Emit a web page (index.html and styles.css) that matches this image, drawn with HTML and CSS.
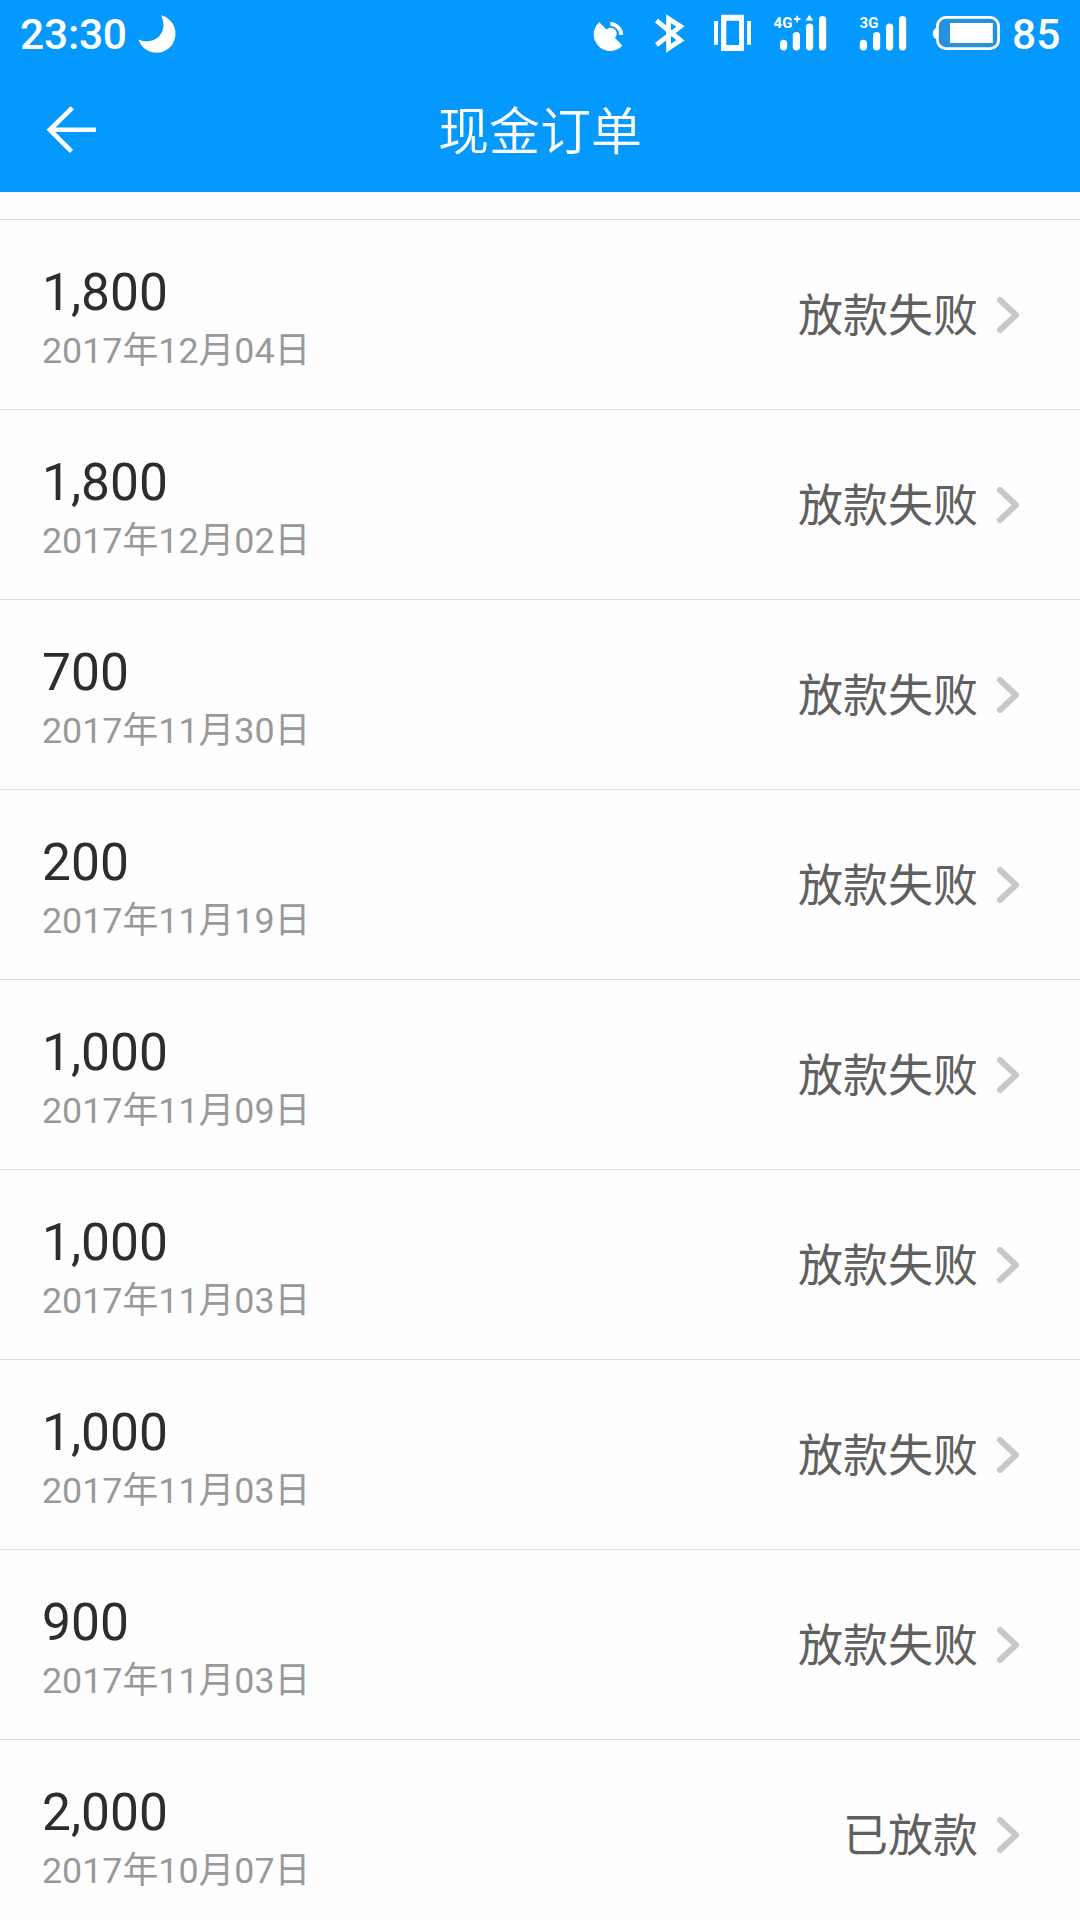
FILE: index.html
```html
<!DOCTYPE html>
<html lang="zh-CN">
<head>
<meta charset="utf-8">
<title>现金订单</title>
<link rel="stylesheet" href="styles.css">
</head>
<body>
<header class="header">
  <div class="status-bar">
    <div class="status-left">
      <span class="clock">23:30</span>
      <svg class="moon" width="40" height="68" viewBox="138 0 40 68"><path d="M161 15.3A19 19 0 1 1 138.4 39.6C153 46 170 34 161 15.3Z"/></svg>
    </div>
    <div class="status-right">
      <svg width="50" height="68" viewBox="590 0 50 68"><path d="M599.3 22.3L606.5 29.5A5 5 0 0 1 615 38L622.4 45.5A16.4 16.4 0 1 1 599.3 22.3Z"/><path class="line" stroke-width="3.8" d="M610.3 23.8A11.5 11.5 0 0 1 621.3 34.8"/></svg>
      <svg width="60" height="68" viewBox="640 0 60 68"><path class="line" stroke-width="4.8" d="M656.5 20.7L680.5 40.3L668.6 48.3V18.7L680.5 26.5L656.5 44.8"/></svg>
      <svg width="70" height="68" viewBox="700 0 70 68"><path d="M714 21h3.9v23.7H714zM747.1 21h3.9v23.7h-3.9z"/><path fill-rule="evenodd" d="M721.1 14.7H744V51H721.1zM726.3 20.8V45H739.1V20.8z"/></svg>
      <svg width="80" height="68" viewBox="770 0 80 68"><text class="network" x="773.5" y="27.8" textLength="19">4G</text><path d="M794 19h6.4M797.2 15.8v6.4" class="line" stroke-width="1.8"/><rect x="780" y="39.7" width="7.2" height="10.7" rx="3.6"/><rect x="792.8" y="32" width="7.2" height="18.4" rx="3.6"/><rect x="806" y="23.5" width="7.2" height="26.9" rx="3.6"/><rect x="819" y="16" width="7.2" height="34.4" rx="3.6"/><path d="M809.4 14.8L813.3 20.5H805.5Z"/></svg>
      <svg width="70" height="68" viewBox="850 0 70 68"><text class="network" x="859.5" y="27.8" textLength="19">3G</text><rect x="859.8" y="39.7" width="7.2" height="10.7" rx="3.6"/><rect x="873" y="32" width="7.2" height="18.4" rx="3.6"/><rect x="886" y="23.5" width="7.2" height="26.9" rx="3.6"/><rect x="899" y="16" width="7.2" height="34.4" rx="3.6"/></svg>
      <svg width="82" height="68" viewBox="930 0 82 68"><path d="M938 27C931 29 931 38 938 40Z"/><rect class="battery" x="937.4" y="17.4" width="61.2" height="31.2" rx="8.5"/><rect x="950" y="23" width="42.8" height="20"/></svg>
      <span class="battery-level">85</span>
    </div>
  </div>
  <nav class="title-bar">
    <svg class="back" width="60" height="60" viewBox="42 100 60 60"><path class="line" stroke-width="4.6" d="M96 129.8H50M72.3 107.8L49.8 129.8L71.5 151.3"/></svg>
    <h1 class="title">现金订单</h1>
  </nav>
</header>
<main class="orders">
  <div class="order"><div class="info"><div class="amount">1,800</div><div class="date">2017年12月04日</div></div><div class="state">放款失败</div><svg class="chevron" width="26" height="40" viewBox="0 0 26 40"><path d="M4 4L20 19L4 34"/></svg></div>
  <div class="order"><div class="info"><div class="amount">1,800</div><div class="date">2017年12月02日</div></div><div class="state">放款失败</div><svg class="chevron" width="26" height="40" viewBox="0 0 26 40"><path d="M4 4L20 19L4 34"/></svg></div>
  <div class="order"><div class="info"><div class="amount">700</div><div class="date">2017年11月30日</div></div><div class="state">放款失败</div><svg class="chevron" width="26" height="40" viewBox="0 0 26 40"><path d="M4 4L20 19L4 34"/></svg></div>
  <div class="order"><div class="info"><div class="amount">200</div><div class="date">2017年11月19日</div></div><div class="state">放款失败</div><svg class="chevron" width="26" height="40" viewBox="0 0 26 40"><path d="M4 4L20 19L4 34"/></svg></div>
  <div class="order"><div class="info"><div class="amount">1,000</div><div class="date">2017年11月09日</div></div><div class="state">放款失败</div><svg class="chevron" width="26" height="40" viewBox="0 0 26 40"><path d="M4 4L20 19L4 34"/></svg></div>
  <div class="order"><div class="info"><div class="amount">1,000</div><div class="date">2017年11月03日</div></div><div class="state">放款失败</div><svg class="chevron" width="26" height="40" viewBox="0 0 26 40"><path d="M4 4L20 19L4 34"/></svg></div>
  <div class="order"><div class="info"><div class="amount">1,000</div><div class="date">2017年11月03日</div></div><div class="state">放款失败</div><svg class="chevron" width="26" height="40" viewBox="0 0 26 40"><path d="M4 4L20 19L4 34"/></svg></div>
  <div class="order"><div class="info"><div class="amount">900</div><div class="date">2017年11月03日</div></div><div class="state">放款失败</div><svg class="chevron" width="26" height="40" viewBox="0 0 26 40"><path d="M4 4L20 19L4 34"/></svg></div>
  <div class="order"><div class="info"><div class="amount">2,000</div><div class="date">2017年10月07日</div></div><div class="state">已放款</div><svg class="chevron" width="26" height="40" viewBox="0 0 26 40"><path d="M4 4L20 19L4 34"/></svg></div>
</main>
</body>
</html>
```
FILE: styles.css
```css
* { box-sizing: border-box; }
body {
  margin: 0;
  height: 1920px;
  overflow: hidden;
  display: flex;
  flex-direction: column;
  background: #fefefe;
  font-family: Roboto, "Noto Sans CJK SC", sans-serif;
}
svg { display: block; flex: none; fill: #fff; }
.line { fill: none; stroke: #fff; }
.header { flex: none; height: 192px; background: #0399ff; color: #fff; }
.status-bar { display: flex; justify-content: space-between; height: 68px; padding-left: 20px; }
.status-left, .status-right { display: flex; }
.clock, .battery-level { font-size: 42.5px; font-weight: 500; line-height: 69px; }
.clock { width: 118px; letter-spacing: -0.2px; }
.battery-level { width: 68px; }
.status-right svg:nth-of-type(6) { margin-left: 10px; }
.network { font: 700 15px Roboto, sans-serif; }
.battery { fill: #2791dd; stroke: #fff; stroke-width: 2.8; }
.title-bar { display: grid; grid-template-columns: 60px 1fr 60px; align-items: center; height: 124px; padding: 0 42px; }
.title { margin: 0; padding-top: 5px; font-size: 51px; font-weight: 350; line-height: 74px; text-align: center; }
.orders { flex: none; padding-top: 27px; }
.order { display: flex; height: 190px; padding-left: 42px; border-top: 1px solid #dedede; }
.info { flex: 1; padding-top: 42px; }
.amount { font-size: 51.5px; line-height: 62px; color: #2d2d2d; }
.date { font-size: 35.8px; line-height: 54px; color: #999; }
.state { padding-top: 64px; font-size: 45px; line-height: 66px; color: #606060; }
.chevron { margin: 76px 58px 0 18px; fill: none; stroke: #c8c8c8; stroke-width: 6; stroke-linecap: round; stroke-linejoin: round; }
```
